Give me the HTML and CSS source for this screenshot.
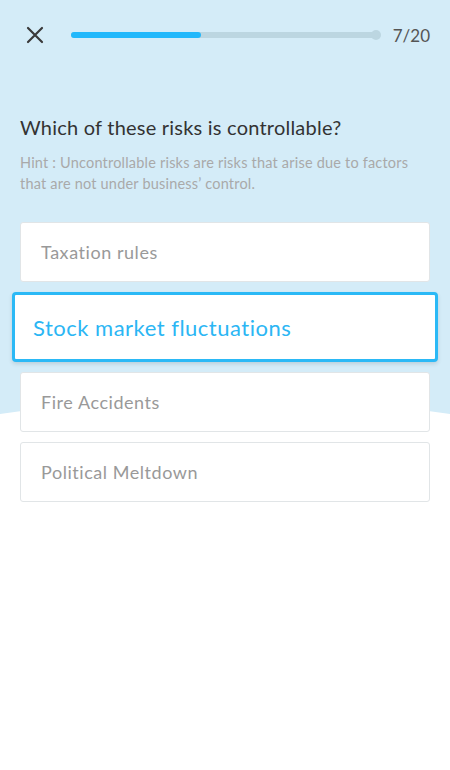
FILE: index.html
```html
<!DOCTYPE html>
<html>
<head>
<meta charset="utf-8">
<link rel="stylesheet" href="styles.css">
</head>
<body>
<div class="screen">
  <div class="bg-curve"></div>
  <header class="topbar">
    <button class="close" aria-label="Close">
      <svg width="18" height="18" viewBox="0 0 18 18"><path d="M2 2 L16 16 M16 2 L2 16" stroke="#3a3a3a" stroke-width="2.2" stroke-linecap="round"/></svg>
    </button>
    <div class="progress">
      <div class="progress-fill" style="width:130px"></div>
      <div class="progress-end"></div>
    </div>
    <div class="counter">7/20</div>
  </header>
  <main class="content">
    <h1 class="question">Which of these risks is controllable?</h1>
    <p class="hint">Hint : Uncontrollable risks are risks that arise due to factors that are not under business’ control.</p>
    <div class="options">
      <div class="option">Taxation rules</div>
      <div class="option selected">Stock market fluctuations</div>
      <div class="option">Fire Accidents</div>
      <div class="option">Political Meltdown</div>
    </div>
  </main>
</div>
</body>
</html>
```
FILE: styles.css
```css
* { box-sizing: border-box; }
html, body { margin: 0; padding: 0; }
body {
  width: 450px;
  height: 770px;
  background: #ffffff;
  font-family: Lato, "Noto Sans", sans-serif;
  overflow: hidden;
}
.screen {
  position: relative;
  width: 450px;
  height: 770px;
  background: #d4ecf8;
  overflow: hidden;
}
.bg-curve {
  position: absolute;
  left: -375px;
  top: 398px;
  width: 1200px;
  height: 440px;
  border-radius: 50%;
  background: #ffffff;
  box-shadow: 0 400px 0 200px #ffffff;
}
.topbar {
  position: relative;
  display: flex;
  align-items: center;
  height: 70px;
  padding: 0 20px 0 26px;
}
.close {
  width: 18px;
  height: 18px;
  padding: 0;
  border: 0;
  background: none;
  display: flex;
}
.progress {
  position: relative;
  flex: 1;
  height: 6px;
  margin: 0 12px 0 27px;
  background: #bcd6e1;
  border-radius: 3px;
}
.progress-fill {
  height: 6px;
  background: #22b8fb;
  border-radius: 3px;
}
.progress-end {
  position: absolute;
  right: -3px;
  top: -2px;
  width: 10px;
  height: 10px;
  border-radius: 50%;
  background: #bcd6e1;
}
.counter {
  font-size: 17px;
  color: #555555;
  margin-left: 3px;
}
.content {
  position: relative;
  padding: 43px 20px 0 20px;
}
.question {
  margin: 0;
  font-size: 20px;
  letter-spacing: 0.22px;
  font-weight: 400;
  color: #333333;
  line-height: 28px;
}
.hint {
  margin: 11px 0 0 0;
  font-size: 14.5px;
  letter-spacing: 0.2px;
  line-height: 21px;
  color: #a9a9a9;
}
.options {
  display: flex;
  flex-direction: column;
  gap: 10px;
  margin-top: 28px;
}
.option {
  height: 60px;
  display: flex;
  align-items: center;
  padding: 0 20px;
  background: #ffffff;
  border: 1px solid #e1e5e7;
  border-radius: 3px;
  font-size: 18px;
  letter-spacing: 0.55px;
  color: #999999;
}
.option.selected {
  height: 70px;
  margin: 0 -8px;
  padding: 0 18px;
  border: 3px solid #2bb9f6;
  border-radius: 4px;
  font-size: 22px;
  letter-spacing: 0.5px;
  color: #2bb6f4;
  box-shadow: 0 2px 4px rgba(0, 0, 0, 0.12);
}
```
